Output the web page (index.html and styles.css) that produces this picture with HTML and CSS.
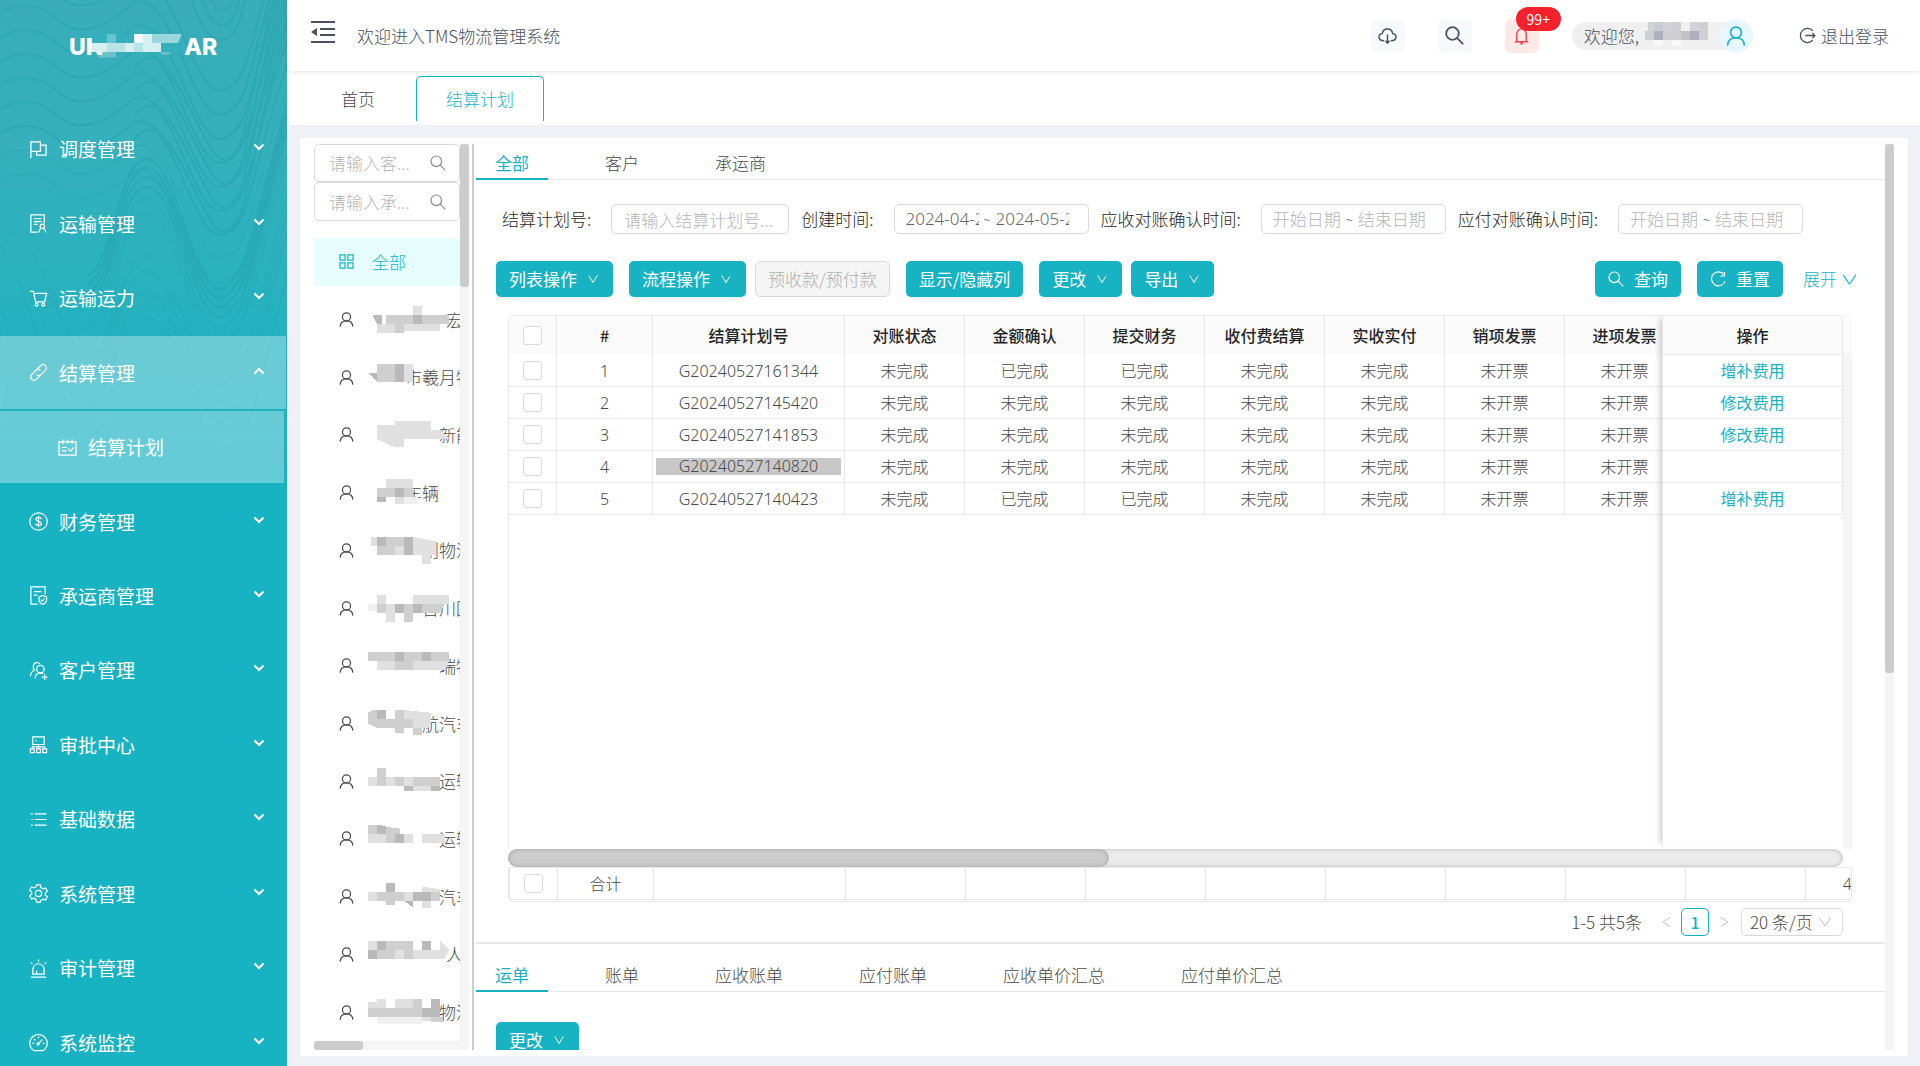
FILE: index.html
```html
<!DOCTYPE html>
<html lang="zh-CN">
<head>
<meta charset="utf-8">
<meta name="viewport" content="width=device-width, initial-scale=1">
<title>TMS物流管理系统</title>
<link rel="stylesheet" href="styles.css">
</head>
<body>
<svg class="defs" aria-hidden="true">
  <defs>
    <symbol id="i-down" viewBox="0 0 10 10"><path d="M0.8 1.5 5 8.5 9.2 1.5"/></symbol>
    <symbol id="i-caret" viewBox="0 0 12 8"><path d="M1.5 1.5 6 6 10.5 1.5"/></symbol>
    <symbol id="i-search" viewBox="0 0 16 16"><circle cx="6.3" cy="6.3" r="5.3"/><path d="M10.2 10.2 15.3 15.3"/></symbol>
    <symbol id="i-user" viewBox="0 0 16 16"><circle cx="8" cy="5.2" r="4.3"/><path d="M1.2 15.6C1.5 11.5 4 9.4 8 9.400s6.5 2.1 6.8 6.2"/></symbol>
    <path id="wave" d="M-10 34C10 12 40 14 58 32S105 40 130 18 175 55 192 92 220 135 236 118 262 20 290 -50"/>
    <path id="dip" d="M134 152C158 120 178 170 196 205S222 255 236 235 258 120 290 30"/>
    <path id="hill" d="M86 276C112 270 118 170 142 160S180 220 198 262 226 290 240 270 262 190 290 90"/>
  </defs>
</svg>

<div class="app">
  <aside class="sidebar">
    <svg class="contours" viewBox="0 0 287 560" aria-hidden="true">
      <g>
        <use href="#wave" y="-36"/><use href="#wave" y="-12"/><use href="#wave" y="12"/><use href="#wave" y="36"/><use href="#wave" y="60"/><use href="#wave" y="84"/><use href="#wave" y="108"/>
        <use href="#dip" y="-84"/><use href="#dip" y="-60"/><use href="#dip" y="-36"/><use href="#dip" y="-12"/>
        <use href="#hill"/><use href="#hill" y="9"/><use href="#hill" y="18"/><use href="#hill" y="28"/>
        <path d="M200 -5C210 30 232 40 240 -5M190 -5C205 50 235 60 246 -5M210 -5C216 14 228 18 234 -5"/>
      </g>
      <g class="faint">
        <use href="#wave" y="132"/><use href="#wave" y="156"/><use href="#hill" y="40"/><use href="#hill" y="54"/><use href="#hill" y="96"/><use href="#hill" y="112"/><use href="#hill" y="132"/><use href="#hill" x="4" y="160"/>
        <path d="M-5 225C45 240 50 310 75 345S112 330 120 260M-5 232C30 250 36 330 66 370S110 350 124 280M-5 240C24 262 30 340 60 392S116 370 132 300M-5 300C15 320 10 400 0 420"/>
      </g>
    </svg>
    <div class="logo"><span>UN</span>
      <svg viewBox="0 0 11 3" aria-hidden="true"><g fill="#fff"><path opacity=".25" d="M2 0h1v1H2zM1 2h2v.6H1zM8 2h1v.3H8z"/><path opacity=".5" d="M7 0h3.3l-.4 1H7z"/><path opacity=".65" d="M2 1h2v1H2zM5 1h1v1H5z"/><path opacity=".8" d="M0 1h2v1H0zM4 1h1v1H4zM6 1h2v1H6zM6 0h1v1H6z"/><path opacity=".95" d="M5 0h1v1H5z"/></g></svg>
      <span>AR</span></div>
    <nav class="menu">
      <a href="#"><svg viewBox="0 0 20 20"><path d="M2 19V2h10v10H2M12 5.500h6V16H8v-4"/></svg><span>调度管理</span><svg class="caret"><use href="#i-caret"/></svg></a>
      <a href="#"><svg viewBox="0 0 20 20"><path d="M9 19H2V1h14v9M5 5h8M5 8h8M5 11h4"/><circle cx="14" cy="13" r="2.300"/><path d="M10.500 19.500c0-6 7-6 7 0"/></svg><span>运输管理</span><svg class="caret"><use href="#i-caret"/></svg></a>
      <a href="#"><svg viewBox="0 0 20 20"><path d="M1 2.500h3.500l2.500 11h9.500l2-9H5"/><circle cx="8" cy="16.500" r="1.500"/><circle cx="15" cy="16.500" r="1.500"/></svg><span>运输运力</span><svg class="caret"><use href="#i-caret"/></svg></a>
      <a href="#" class="open"><svg viewBox="0 0 20 20"><path d="M8.500 6.500l3.800-3.800a3.200 3.200 0 0 1 5 5L13 12a3.200 3.200 0 0 1-5 0M11.500 13.500l-3.800 3.800a3.200 3.200 0 0 1-5-5L7 8a3.200 3.200 0 0 1 5 0"/></svg><span>结算管理</span><svg class="caret up"><use href="#i-caret"/></svg></a>
      <a href="#" class="child"><svg viewBox="0 0 20 20"><path d="M1 4h18v14H1zM5 1.500V6M10 1.500V6M15 1.500V6M4 10h5M4 13.500h5M11 11l2 3 3.500-4"/></svg><span>结算计划</span></a>
      <a href="#"><svg viewBox="0 0 20 20"><circle cx="10" cy="10" r="9.200"/><path d="M10 4v12M13 7.500C12.500 5 7.300 5 7.300 7.700 7.300 10.500 13 9 13 12.200 13 15 7.500 15 7 12.300"/></svg><span>财务管理</span><svg class="caret"><use href="#i-caret"/></svg></a>
      <a href="#"><svg viewBox="0 0 20 20"><path d="M9 19H2V1h15v8M5 6h8M5 9.500h4M14.500 10l4 1.500v3.500c0 2-2 3.500-4 4.500-2-1-4-2.500-4-4.500v-3.500zM12.500 14.500l1.500 1.500 2.500-3"/></svg><span>承运商管理</span><svg class="caret"><use href="#i-caret"/></svg></a>
      <a href="#"><svg viewBox="0 0 20 20"><path d="M6 10C3.500 8 4 2 8 1.500c1.500 0 2.500.5 3.500 1.500M5.500 10C3 11 1.500 13 1.500 16M6.500 18.500c0-3 1.500-5.500 5-6 1.500 0 2.500 0 3.500 1M16.500 14v6M13.500 17h6"/><circle cx="12" cy="8.500" r="4"/></svg><span>客户管理</span><svg class="caret"><use href="#i-caret"/></svg></a>
      <a href="#"><svg viewBox="0 0 20 20"><path d="M4 2h12v8H4zM6.500 6h1.500M10 10v4M3.500 14.500v-2h13v2M1.500 14.500h4v4h-4zM8 14.500h4v4H8zM14.500 14.500h4v4h-4z"/></svg><span>审批中心</span><svg class="caret"><use href="#i-caret"/></svg></a>
      <a href="#"><svg viewBox="0 0 20 20"><path d="M6 4h12.500M6 10h12.500M6 16h12.500M2 4h2M2 10h2M2 16h2"/></svg><span>基础数据</span><svg class="caret"><use href="#i-caret"/></svg></a>
      <a href="#"><svg viewBox="0 0 20 20"><circle cx="10" cy="10" r="3.300"/><path d="M8 1h4l.6 2.800 2 1.200 2.700-.9 2 3.400-2.100 1.900v2.200l2.100 1.900-2 3.400-2.700-.9-2 1.200L12 19H8l-.6-2.800-2-1.200-2.700.9-2-3.400 2.100-1.900V8.400L.7 6.500l2-3.400 2.700.9 2-1.200z"/></svg><span>系统管理</span><svg class="caret"><use href="#i-caret"/></svg></a>
      <a href="#"><svg viewBox="0 0 20 20"><path d="M2 19.200h16M4 16V11a6 6 0 0 1 12 0v5zM4 16h12M8 16v-4M10 .5v2.500M2 3.500l1.500 1.500M18 3.500l-1.500 1.500"/></svg><span>审计管理</span><svg class="caret"><use href="#i-caret"/></svg></a>
      <a href="#"><svg viewBox="0 0 20 20"><path d="M5 18.500a9.200 9.200 0 1 1 10 0zM10 11l4-4M10 3.500v2M3.500 11h2M14.500 11h2M5.300 6.300l1.400 1.400"/><circle cx="9.500" cy="11.500" r="1"/></svg><span>系统监控</span><svg class="caret"><use href="#i-caret"/></svg></a>
    </nav>
  </aside>

  <div class="page">
    <header class="topbar">
      <button class="plain" type="button" aria-label="收起菜单"><svg class="fold" viewBox="0 0 24 22"><path d="M0 1h24M9 8h15M9 14h15M0 21h24"/><path class="solid" d="M0 11 6 7v8z"/></svg></button>
      <span class="welcome">欢迎进入TMS物流管理系统</span>
      <div class="tools">
        <button class="tool" type="button" aria-label="下载"><svg viewBox="0 0 20 20"><path d="M6.500 15.500C-1 15.500 0 8 4.500 8 5.500 1.500 14.500 1.500 15.500 8 20 8 21 15.500 13.500 15.500M10 9v9M7.800 15.500 10 18l2.200-2.500"/></svg></button>
        <button class="tool" type="button" aria-label="搜索"><svg><use href="#i-search"/></svg></button>
        <button class="tool alert" type="button" aria-label="消息"><svg viewBox="0 0 16 20"><path d="M1 16.500h14M3 16.500V9a5 6 0 0 1 10 0v7.500M8 1v2M6.500 17l1.500 2 1.500-2"/></svg><span class="badge">99+</span></button>
        <div class="who"><span>欢迎您,</span>
          <svg class="blocks" viewBox="0 0 8 3" aria-hidden="true"><path fill="#d0d3da" d="M0.300 0h1v1h-1zM2 0h1v1H2zM5 0h1v1H5z"/><path fill="#c8cdd8" d="M1 0h1v1H1z"/><path fill="#cfcfd2" d="M3 0h1v1H3zM6 0h1v1H6zM0 1h1v1H0zM2 1h2v1H2zM6 1h1v1H6z"/><path fill="#aeb1bd" d="M1 1h1v1H1zM5 1h1v1H5z"/><path fill="#c2c2c4" d="M4 1h1v1H4z"/><path fill="#f8f8f8" d="M1 2h1v.7H1zM3 2h1v.7H3z"/></svg>
          <span class="avatar"><svg><use href="#i-user"/></svg></span>
        </div>
        <a class="logout" href="#"><svg viewBox="0 0 16 16"><path d="M13 3.500A6.700 6.700 0 1 0 13 12.500M6 8h9M12.500 5.500 15 8l-2.500 2.500"/></svg>退出登录</a>
      </div>
    </header>
    <nav class="pagetabs"><a href="#">首页</a><a href="#" class="on">结算计划</a></nav>

    <main class="panel">
      <section class="partners">
        <div class="partner-body">
          <div class="partner-main">
            <div class="finder"><input type="text" placeholder="请输入客..." aria-label="客户"><svg><use href="#i-search"/></svg></div>
            <div class="finder"><input type="text" placeholder="请输入承..." aria-label="承运商"><svg><use href="#i-search"/></svg></div>
            <ul class="plist">
              <li class="all"><svg class="pi" viewBox="0 0 16 16"><path d="M1 1h5.500v5.500H1zM9.500 1H15v5.500H9.500zM1 9.500h5.500V15H1zM9.500 9.500H15V15H9.500z"/></svg>全部</li>
              <li><svg class="pi"><use href="#i-user"/></svg><svg class="blocks w78" viewBox="0 0 9 3"><path class="m1" d="M.5 1h1v1H1zM5 1h1v1H5z"/><path class="m2" d="M2 1h3v1H2zM6 1h3v1H6zM3 2h1v1H3z"/><path class="m3" d="M5 0h1v1H5zM1 2h2v1H1zM4 2h4v.8H4z"/></svg>宏运</li>
              <li><svg class="pi"><use href="#i-user"/></svg><svg class="blocks w36" viewBox="0 0 9 3"><path class="m1" d="M0 1h1v1zM3 0h1v1H3zM3 1h1v1H3z"/><path class="m2" d="M1 0h2v1H1zM1 1h2v1H1z"/><path class="m3" d="M4 0h1v2H4z"/></svg>市羲月物</li>
              <li><svg class="pi"><use href="#i-user"/></svg><svg class="blocks w72" viewBox="0 0 9 3"><path class="m2" d="M1 1h1v1H1zM3 1h1v1H3z"/><path class="m3" d="M1 .4h2V0h4v1h1l1 1H4v.9H3L1 2z"/></svg>新能源</li>
              <li><svg class="pi"><use href="#i-user"/></svg><svg class="blocks w36" viewBox="0 0 9 3"><path class="m1" d="M3 1h1v1H3zM1 2h1v.6H1z"/><path class="m2" d="M1 1h2v1H1zM4 1h1v1H4z"/><path class="m3" d="M2 0h3v1H2zM3 2h1v.8H3z"/><path class="m4" d="M4 2h1.500v.8H4z"/></svg>车辆</li>
              <li><svg class="pi"><use href="#i-user"/></svg><svg class="blocks w54" viewBox="0 0 9 3"><path class="m1" d="M1 0h1v1H1zM4 0h1v2H4z"/><path class="m2" d="M2 0h2v1H2zM1 1h2v1H1zM6 1h1v1H6z"/><path class="m3" d="M.300 0H1v1H.300zM3 1h1v1H3zM5 0l2.500 .5V2H5zM6 2h1v1H6z"/></svg>创物流</li>
              <li><svg class="pi"><use href="#i-user"/></svg><svg class="blocks w54" viewBox="0 0 9 3"><path class="m1" d="M3 1h1v1H3zM5 1h1v1H5z"/><path class="m2" d="M1 1h1v1H1zM4 1h1v2H4zM6 1h2.500L8 2H6z"/><path class="m3" d="M1 0h1v1H1zM5 0h4v1H5zM2 1h1v2H2z"/><path class="m4" d="M0 1h1v.8H0z"/></svg>台川国</li>
              <li><svg class="pi"><use href="#i-user"/></svg><svg class="blocks w72" viewBox="0 0 9 3"><path class="m1" d="M3 0h1v1H3zM6 0h1v1H6z"/><path class="m2" d="M0 0h3v1H0zM4 0h2v1H4zM7 0h2v1H7zM3 1h2v1H3z"/><path class="m3" d="M1 1h2v1H1zM5 1h4l-.5 1H5z"/></svg>瑞物流</li>
              <li><svg class="pi"><use href="#i-user"/></svg><svg class="blocks w54" viewBox="0 0 9 3"><path class="m1" d="M1 0h1v1H1z"/><path class="m2" d="M0 .3.600 0H1v2L0 1.500zM1 1h4v1H1zM3 0h1v1H3zM3 2h1v.6H3zM5 2h1v.8H5z"/><path class="m3" d="M4 0l3 .3v1.700H5V1H4z"/></svg>航汽车</li>
              <li><svg class="pi"><use href="#i-user"/></svg><svg class="blocks w72" viewBox="0 0 9 3"><path class="m1" d="M4 2h1v.5H4zM7 2h1v.5H7z"/><path class="m2" d="M1 0h1v1H1zM1 1h1v1H1zM3 1h1v1H3zM5 1h3v1H5z"/><path class="m3" d="M0 1h1v1H0zM2 1h1v1H2zM4 1h1v1H4zM5 2h2v.5H5z"/></svg>运输</li>
              <li><svg class="pi"><use href="#i-user"/></svg><svg class="blocks w72" viewBox="0 0 9 3"><path class="m1" d="M1 0l1 .1V1H1zM3 1h1v1H3z"/><path class="m2" d="M0 0h1v1H0zM2 .2 3.500.400V1H2zM2 1h1v1H2z"/><path class="m3" d="M0 1h2v1H0zM4 1h1v1H4zM6 1h2.500v1H6z"/></svg>运输</li>
              <li><svg class="pi"><use href="#i-user"/></svg><svg class="blocks w72" viewBox="0 0 9 3"><path class="m1" d="M2 0h1v1H2zM5 1h2v1H5zM4 2h1v.7z"/><path class="m2" d="M1 1h3v1H1zM7 1h1v1H7zM2 2h1v.4H2z"/><path class="m3" d="M4 1h1v1H4zM6 .4 8 .7V1H6zM6 2h1v.8H6zM0 1h1v1H0z"/></svg>汽车</li>
              <li><svg class="pi"><use href="#i-user"/></svg><svg class="blocks w78" viewBox="0 0 9 3"><path class="m1" d="M1 0h1v1H1zM0 1h1v1H0zM6 0h1v1H6z"/><path class="m2" d="M2 0h3v1H2zM1 1h2v1H1zM4 1h1v1H4z"/><path class="m3" d="M0 0h1v1H0zM3 1h1v1H3zM5 1h3v1H5zM8 0l1 1-.5 1H8z"/></svg>人运输</li>
              <li><svg class="pi"><use href="#i-user"/></svg><svg class="blocks w72" viewBox="0 0 9 3"><path class="m1" d="M6 1h2v1H6zM7 0h1v1H7z"/><path class="m2" d="M0 1h6v1H0zM5 0h1v1H5zM7 2h1.300v.5H7z"/><path class="m3" d="M0 .3h1V0h1v1H0zM3 0h2v1H3zM6 2h1v.4H6z"/><path class="m4" d="M1 2h5v.8H1z"/></svg>物流</li>
            </ul>
          </div>
          <div class="vbar"><i class="thumb"></i></div>
        </div>
        <div class="hbar"><i class="thumb"></i></div>
      </section>

      <section class="work">
        <div class="work-main">
          <nav class="tabs"><a href="#" class="on">全部</a><a href="#">客户</a><a href="#">承运商</a></nav>

          <form class="filters">
            <label for="f-no">结算计划号:</label><input id="f-no" class="box w178" type="text" placeholder="请输入结算计划号...">
            <label for="f-c">创建时间:</label><div class="box range w195"><input id="f-c" class="filled" type="text" value="2024-04-27"><span>~</span><input class="filled" type="text" value="2024-05-27" aria-label="创建时间结束"></div>
            <label for="f-r">应收对账确认时间:</label><div class="box range w185"><input id="f-r" type="text" placeholder="开始日期"><span>~</span><input type="text" placeholder="结束日期" aria-label="应收结束日期"></div>
            <label for="f-p">应付对账确认时间:</label><div class="box range w185"><input id="f-p" type="text" placeholder="开始日期"><span>~</span><input type="text" placeholder="结束日期" aria-label="应付结束日期"></div>
          </form>

          <div class="actions">
            <button class="btn" type="button">列表操作<svg><use href="#i-down"/></svg></button>
            <div class="pair"><button class="btn" type="button">流程操作<svg><use href="#i-down"/></svg></button><button class="btn" type="button" disabled>预收款/预付款</button></div>
            <button class="btn" type="button">显示/隐藏列</button>
            <div class="pair"><button class="btn" type="button">更改<svg><use href="#i-down"/></svg></button><button class="btn" type="button">导出<svg><use href="#i-down"/></svg></button></div>
            <div class="right">
              <button class="btn lead" type="button"><svg><use href="#i-search"/></svg>查询</button>
              <button class="btn lead" type="button"><svg viewBox="0 0 16 16"><path d="M14 3.500A7 7 0 1 0 15 10.500M14.500 1v4H10.500"/></svg>重置</button>
              <a class="expand" href="#">展开<svg viewBox="0 0 16 12"><path d="M1 1 8 11 15 1"/></svg></a>
            </div>
          </div>

          <div class="grid">
            <div class="grid-body">
              <div class="scroller">
                <table class="t wide">
                  <colgroup><col class="c48"><col class="c96"><col class="c192"><col class="c120"><col class="c120"><col class="c120"><col class="c120"><col class="c120"><col class="c120"><col class="c120"></colgroup>
                  <thead><tr><th><input type="checkbox" aria-label="全选"></th><th>#</th><th>结算计划号</th><th>对账状态</th><th>金额确认</th><th>提交财务</th><th>收付费结算</th><th>实收实付</th><th>销项发票</th><th>进项发票</th></tr></thead>
                  <tbody>
                    <tr><td><input type="checkbox" aria-label="选择1"></td><td>1</td><td>G20240527161344</td><td>未完成</td><td>已完成</td><td>已完成</td><td>未完成</td><td>未完成</td><td>未开票</td><td>未开票</td></tr>
                    <tr><td><input type="checkbox" aria-label="选择2"></td><td>2</td><td>G20240527145420</td><td>未完成</td><td>未完成</td><td>未完成</td><td>未完成</td><td>未完成</td><td>未开票</td><td>未开票</td></tr>
                    <tr><td><input type="checkbox" aria-label="选择3"></td><td>3</td><td>G20240527141853</td><td>未完成</td><td>未完成</td><td>未完成</td><td>未完成</td><td>未完成</td><td>未开票</td><td>未开票</td></tr>
                    <tr><td><input type="checkbox" aria-label="选择4"></td><td>4</td><td><span class="mark">G20240527140820</span></td><td>未完成</td><td>未完成</td><td>未完成</td><td>未完成</td><td>未完成</td><td>未开票</td><td>未开票</td></tr>
                    <tr><td><input type="checkbox" aria-label="选择5"></td><td>5</td><td>G20240527140423</td><td>未完成</td><td>已完成</td><td>已完成</td><td>未完成</td><td>未完成</td><td>未开票</td><td>未开票</td></tr>
                  </tbody>
                </table>
              </div>
              <div class="pinned">
                <table class="t">
                  <thead><tr><th>操作</th></tr></thead>
                  <tbody>
                    <tr><td><a href="#">增补费用</a></td></tr>
                    <tr><td><a href="#">修改费用</a></td></tr>
                    <tr><td><a href="#">修改费用</a></td></tr>
                    <tr><td></td></tr>
                    <tr><td><a href="#">增补费用</a></td></tr>
                  </tbody>
                </table>
              </div>
              <div class="gutter"></div>
            </div>
            <div class="slide"><i></i></div>
            <div class="sum">
              <table class="t wide">
                <colgroup><col class="c48"><col class="c96"><col class="c192"><col class="c120"><col class="c120"><col class="c120"><col class="c120"><col class="c120"><col class="c120"><col class="c120"><col class="c120"><col class="c120"></colgroup>
                <tbody><tr><td><input type="checkbox" aria-label="合计"></td><td>合计</td><td></td><td></td><td></td><td></td><td></td><td></td><td></td><td></td><td></td><td>45000</td></tr></tbody>
              </table>
            </div>
          </div>

          <div class="pager">
            <span class="count">1-5 共5条</span>
            <button class="plain" type="button" aria-label="上一页" disabled><svg viewBox="0 0 10 12"><path d="M9 1 1 6 9 11"/></svg></button>
            <button class="num" type="button">1</button>
            <button class="plain" type="button" aria-label="下一页" disabled><svg viewBox="0 0 10 12"><path d="M1 1 9 6 1 11"/></svg></button>
            <div class="size"><select aria-label="每页条数"><option>20 条/页</option></select><svg viewBox="0 0 12 10"><path d="M.5 1 6 9 11.500 1"/></svg></div>
          </div>

          <div class="detail">
            <nav class="tabs"><a href="#" class="on">运单</a><a href="#">账单</a><a href="#">应收账单</a><a href="#">应付账单</a><a href="#">应收单价汇总</a><a href="#">应付单价汇总</a></nav>
            <button class="btn" type="button">更改<svg><use href="#i-down"/></svg></button>
          </div>
        </div>
        <div class="vbar tall"><i class="thumb"></i></div>
      </section>
    </main>
  </div>
</div>
</body>
</html>
```
FILE: styles.css
```css
:root {
  --teal: #17b3c3;
  --line: #e8e8e8;
  --border: #d9d9d9;
  --text: #4a4a4a;
  --slate: #46505f;
}
* { box-sizing: border-box; }
body {
  margin: 0;
  font: 300 17px/24px "Noto Sans CJK SC", "Noto Sans", sans-serif;
  color: var(--text);
  background: #f0f1f6;
}
a { color: inherit; text-decoration: none; }
button, input, select { font: inherit; color: inherit; }
input, select { outline: 0; }
::placeholder { color: #b4b4b4; opacity: 1; }
svg { flex: none; fill: none; stroke: currentColor; }
.defs { position: absolute; width: 0; height: 0; }
.plain { padding: 0; border: 0; background: none; line-height: 0; }
.app { display: flex; height: 100vh; overflow: hidden; }

/* sidebar */
.sidebar {
  position: relative;
  flex: none;
  width: 287px;
  overflow: hidden;
  color: #fff;
  background: linear-gradient(#38adb9 0, #35b0bc 150px, #17b3c3 480px);
}
.contours { position: absolute; top: 0; left: 0; width: 287px; stroke: #23a0ae; stroke-width: 2; opacity: .45; }
.contours .faint { opacity: .4; }
.logo {
  position: relative;
  display: flex;
  align-items: center;
  height: 112px;
  padding: 0 0 18px 69px;
  font: 800 23px/28px Inter, "Open Sans", sans-serif;
}
.logo svg { width: 99px; height: 27px; margin: 0 -4px 0 -14px; stroke: none; z-index: 1; background: linear-gradient(#35afbb, #35afbb) no-repeat 3px 0 / 88px 18px; }
.menu { position: relative; display: grid; grid-auto-rows: 1fr; height: 968px; }
.menu a {
  display: flex;
  align-items: center;
  gap: 11px;
  margin: 1px 1px 1px 0;
  padding: 0 21px 0 29px;
  font-size: 19px;
  font-weight: 400;
}
.menu svg { width: 19px; height: 19px; stroke-width: 1.3; }
.menu .caret { width: 12px; height: 8px; margin-left: auto; margin-bottom: 4px; stroke-width: 2; }
.menu .up { transform: rotate(180deg); }
.menu .open, .menu .child { background: rgba(255, 255, 255, .33); }
.menu .child { margin-right: 3px; padding-left: 58px; }

/* top bar */
.page { flex: 1; min-width: 0; display: flex; flex-direction: column; }
.topbar {
  position: relative;
  display: flex;
  align-items: center;
  height: 71px;
  padding: 0 31px 0 24px;
  color: var(--slate);
  background: #fff;
  box-shadow: 0 1px 4px rgba(0, 21, 41, .1);
}
.fold { width: 24px; height: 22px; margin-bottom: 8px; stroke-width: 2; }
.solid { fill: currentColor; stroke: none; }
.welcome { margin-left: 22px; }
.tools { display: flex; align-items: center; gap: 33px; margin-left: auto; }
.tool {
  position: relative;
  display: flex;
  align-items: center;
  justify-content: center;
  width: 34px;
  height: 34px;
  padding: 0;
  border: 0;
  border-radius: 6px;
  background: #f8f9fb;
}
.tool svg { width: 19px; height: 19px; stroke-width: 1.5; }
.tool.alert { color: #f5454d; background: #ffe9e7; }
.badge {
  position: absolute;
  top: -12px;
  left: 11px;
  width: 45px;
  height: 24px;
  border-radius: 12px;
  background: #f5222d;
  color: #fff;
  font-size: 14px;
  font-weight: 400;
  line-height: 24px;
}
.who { display: flex; align-items: center; height: 28px; padding-left: 12px; border-radius: 14px; background: #f0f0f0; }
.who .blocks { width: 72px; height: 27px; margin: 0 2px 0 6px; }
.avatar { display: flex; align-items: center; justify-content: center; width: 34px; height: 34px; border-radius: 17px; background: #e8f6ff; color: var(--teal); }
.avatar svg { width: 20px; height: 20px; stroke-width: 1.3; }
.logout { display: flex; align-items: center; gap: 5px; margin-left: 13px; }
.logout svg { width: 17px; height: 17px; stroke-width: 1.2; }
.pagetabs { display: flex; gap: 41px; height: 54px; padding: 5px 0 4px 54px; background: #fff; }
.pagetabs a { padding-top: 11px; }
.pagetabs .on { padding: 10px 29px 0; color: var(--teal); border: 1px solid var(--teal); border-bottom: 0; border-radius: 5px 5px 0 0; }

/* panel */
.panel { flex: 1; min-height: 0; display: flex; margin: 13px 12px 10px 13px; padding: 6px 14px 6px; background: #fff; }
.partners { display: flex; flex-direction: column; width: 155px; flex: none; }
.partner-body { flex: 1; min-height: 0; display: flex; }
.partner-main { flex: 1; min-width: 0; display: flex; flex-direction: column; overflow: hidden; }
.finder { display: flex; align-items: center; height: 38px; padding: 0 13px 0 14px; border: 1px solid var(--border); border-radius: 5px; }
.finder + .finder { height: 39px; }
.finder input { flex: 1; min-width: 0; padding: 0; border: 0; }
.finder svg { width: 16px; height: 16px; color: #8c8c8c; stroke-width: 1.2; }
.plist { flex: 1; display: grid; grid-auto-rows: 1fr; margin: 12px 0 0; padding: 0; list-style: none; }
.plist li { display: flex; align-items: center; padding-left: 25px; white-space: nowrap; }
.plist .all { margin: 5px 0; color: var(--teal); background: #e6fffe; gap: 18px; }
.pi { width: 15px; height: 15px; stroke-width: 1.3; }
.blocks { height: 27px; stroke: none; shape-rendering: crispEdges; }
.plist .blocks { width: 81px; margin-left: 14px; z-index: 1; }
.w78 { margin-right: -3px; }
.w72 { margin-right: -10px; }
.w54 { margin-right: -27px; }
.w36 { margin-right: -44px; }
.m1 { fill: #b9b9b9; }
.m2 { fill: #cfcfcf; }
.m3 { fill: #e0e0e0; }
.m4 { fill: #f0f0f0; }
.vbar { flex: none; width: 9px; background: #f5f5f5; }
.thumb { display: block; border-radius: 3px; background: #ccc; }
.vbar .thumb { height: 143px; }
.hbar { height: 9px; background: #f5f5f5; }
.hbar .thumb { width: 49px; height: 9px; }
.vbar.tall .thumb { height: 529px; }

/* work area */
.work { flex: 1; min-width: 0; display: flex; margin-left: 3px; border-left: 2px solid #ccc; padding-left: 2px; }
.work-main { flex: 1; min-width: 0; display: flex; flex-direction: column; }
.tabs { display: flex; flex: none; gap: 38px; height: 36px; box-shadow: inset 0 -1px var(--line); }
.tabs a { padding: 7px 19px 0; }
.tabs .on { color: var(--teal); font-weight: 400; border-bottom: 2px solid var(--teal); }
.filters { display: flex; align-items: center; height: 30px; margin: 24px 0 27px 26px; color: #262626; }
.filters label { margin-right: 20px; white-space: nowrap; }
.box { height: 30px; margin-right: 12px; padding: 0 12px; border: 1px solid var(--border); border-radius: 5px; background: #fff; }
.w178 { width: 178px; }
.w195 { width: 195px; }
.w185 { width: 185px; }
.range { display: flex; align-items: center; padding: 0 11px; color: #666; }
.range input { width: 68px; padding: 0; border: 0; }
.range .filled { width: 73px; font-family: "Noto Sans", sans-serif; }
.range span { width: 17px; text-align: center; font-size: 14px; }
.actions { display: flex; flex: none; gap: 16px; padding: 0 28px 0 20px; }
.pair { display: flex; gap: 9px; }
.right { display: flex; align-items: center; gap: 16px; margin-left: auto; }
.btn {
  display: flex;
  align-items: center;
  gap: 11px;
  height: 36px;
  padding: 0 13px;
  border: 0;
  border-radius: 5px;
  color: #fff;
  background: var(--teal);
  font-weight: 400;
  white-space: nowrap;
  box-shadow: 0 2px 2px rgba(0, 0, 0, .06);
}
.btn svg { width: 10px; height: 10px; margin-right: 2px; stroke-width: 1; }
.btn.lead { gap: 10px; }
.btn.lead svg { width: 16px; height: 16px; margin-right: 0; stroke-width: 1.2; }
.btn:disabled { border: 1px solid var(--border); color: #b0b0b0; background: #f5f5f5; box-shadow: none; padding: 0 12px; font-weight: 300; }
.expand { display: flex; align-items: center; gap: 5px; color: var(--teal); margin-left: 4px; }
.expand svg { width: 15px; height: 11px; stroke-width: 1.2; }

/* data grid */
.grid { flex: 1; min-height: 0; display: flex; flex-direction: column; margin: 18px 33px 0 32px; }
.grid-body { flex: 1; min-height: 0; display: flex; }
.scroller { flex: 1; min-width: 0; overflow: hidden; border: solid var(--line); border-width: 1px 0 0 1px; border-top-left-radius: 5px; }
.t { width: 100%; table-layout: fixed; border-collapse: separate; border-spacing: 0; font-size: 16px; text-align: center; }
.wide { width: max-content; }
.c48 { width: 48px; }
.c96 { width: 96px; }
.c192 { width: 192px; }
.c120 { width: 120px; }
.t th, .t td { padding: 0 3px; border-right: 1px solid var(--line); border-bottom: 1px solid var(--line); white-space: nowrap; overflow: hidden; }
.t th { height: 39px; color: #262626; font-weight: 500; background: #fafafa; }
.t td { height: 32px; line-height: 24px; font-family: "Noto Sans", "Noto Sans CJK SC", sans-serif; }
.scroller th { border-bottom-color: #fff; }
.t input { display: block; width: 19px; height: 19px; margin: 0 auto; appearance: none; border: 1px solid var(--border); border-radius: 3px; background: #fff; }
.t a { color: var(--teal); font-weight: 400; }
.mark { display: block; line-height: 17px; background: #c8c8c8; }
.pinned { position: relative; width: 181px; margin-bottom: 2px; border-top: 1px solid var(--line); border-left: 1px solid var(--line); background: #fff; box-shadow: -6px 0 6px -4px rgba(0, 0, 0, .2); }
.pinned th { border-top-right-radius: 5px; }
.gutter { width: 9px; border-top: 39px solid #fafafa; background: #f5f5f5; }
.slide { flex: none; height: 18px; margin-right: 9px; border-radius: 9px; background: #ebebeb; box-shadow: inset 0 0 5px rgba(0, 0, 0, .2); }
.slide i { display: block; width: 45%; height: 18px; border-radius: 9px; background: #ccc; box-shadow: inset 0 0 5px rgba(0, 0, 0, .2); }
.sum { flex: none; height: 35px; overflow: hidden; border: 1px solid var(--line); border-radius: 0 0 5px 5px; }
.sum table { border-left: 1px solid var(--line); }
.pager { display: flex; flex: none; align-items: center; height: 40px; padding-right: 42px; }
.count { margin-left: auto; margin-right: 20px; }
.pager svg { width: 9px; height: 12px; color: #bfbfbf; }
.num { width: 28px; height: 28px; margin: 0 11px 0 10px; padding: 0; border: 1px solid var(--teal); border-radius: 5px; background: #fff; color: var(--teal); font-size: 16px; line-height: 24px; font-weight: 500; }
.size { display: flex; align-items: center; width: 102px; height: 28px; margin-left: 12px; padding: 0 11px 0 8px; border: 1px solid var(--border); border-radius: 5px; }
.size select { flex: 1; min-width: 0; padding: 0; border: 0; appearance: none; background: none; }
.pager .size svg { width: 12px; height: 10px; }
.detail { flex: none; height: 108px; overflow: hidden; border-top: 2px solid var(--line); }
.detail .tabs { margin-top: 12px; }
.detail .btn { margin: 30px 0 0 20px; }
```
